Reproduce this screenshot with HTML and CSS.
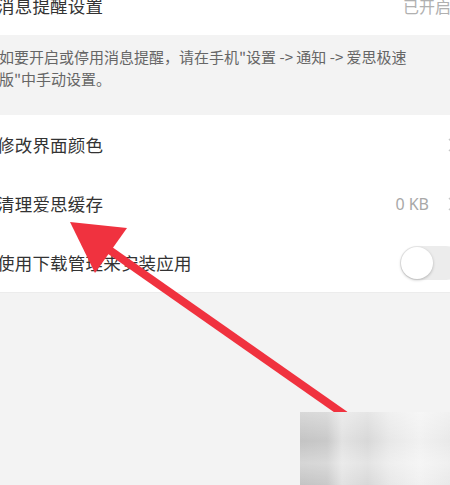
FILE: index.html
```html
<!DOCTYPE html>
<html>
<head>
  <meta name="viewport" content="width=device-width, initial-scale=1">
  <link rel="stylesheet" href="styles.css">
</head>
<body>
  <div class="page">
    <div class="row row-top">
      <span class="label">消息提醒设置</span>
      <span class="value value-on">已开启</span>
    </div>

    <div class="note">
      如要开启或停用消息提醒，请在手机"设置 -&gt; 通知 -&gt; 爱思极速<br>版"中手动设置。
    </div>

    <div class="group">
      <div class="row">
        <span class="label">修改界面颜色</span>
        <svg class="chevron" width="8" height="14" viewBox="0 0 8 14"><path d="M1 1l6 6-6 6" fill="none" stroke="#c8c8c8" stroke-width="1.5"/></svg>
      </div>
      <div class="row">
        <span class="label">清理爱思缓存</span>
        <span class="right">
          <span class="value">0 KB</span>
          <svg class="chevron" width="8" height="14" viewBox="0 0 8 14"><path d="M1 1l6 6-6 6" fill="none" stroke="#c8c8c8" stroke-width="1.5"/></svg>
        </span>
      </div>
      <div class="row">
        <span class="label">使用下载管理来安装应用</span>
        <span class="switch"><span class="knob"></span></span>
      </div>
    </div>
  </div>

  <!-- annotation arrow drawn over the screenshot -->
  <svg class="arrow" width="450" height="485" viewBox="0 0 450 485">
    <line x1="108" y1="249" x2="345" y2="415" stroke="#f0323f" stroke-width="8"/>
    <polygon points="70,222 127,228 95,273" fill="#f0323f"/>
  </svg>

  <div class="mark"></div>
</body>
</html>
```

FILE: styles.css
```css
html, body {
  margin: 0;
  height: 100%;
}
body {
  background: #f3f3f3;
  font-family: "Noto Sans CJK SC", "Noto Sans", sans-serif;
  color: #333;
  overflow: hidden;
  position: relative;
}
.page {
  width: 463px;
  margin-left: -3px;
}
.row {
  height: 59px;
  display: flex;
  align-items: center;
  justify-content: space-between;
  padding-right: 4px;
  background: #fff;
  font-size: 17.5px;
}
.row-top {
  margin-top: -24px;
  padding-right: 0;
}
.label {
  letter-spacing: 0.2px;
}
.value {
  color: #a8a8a8;
  font-size: 16px;
  font-family: "Noto Sans", "Noto Sans CJK SC", sans-serif;
}
.value-on {
  font-size: 16px;
  font-family: "Noto Sans CJK SC", sans-serif;
  color: #b0b0b0;
  margin-right: 9px;
}
.right {
  display: flex;
  align-items: center;
  gap: 19px;
}
.chevron {
  display: block;
}
.note {
  height: 80px;
  box-sizing: border-box;
  padding: 11px 0 0 2px;
  font-size: 15px;
  line-height: 22px;
  color: #666;
  white-space: nowrap;
}
.group {
  border-bottom: 1px solid #ececec;
}
.switch {
  width: 62px;
  height: 34px;
  border-radius: 17px;
  background: #ececec;
  display: flex;
  align-items: center;
  padding-left: 1px;
  margin-right: -7px;
}
.knob {
  width: 32px;
  height: 32px;
  border-radius: 50%;
  background: #fff;
  box-shadow: 0 1px 3px rgba(0, 0, 0, 0.25);
}
.arrow {
  position: absolute;
  left: 0;
  top: 0;
}
.mark {
  position: absolute;
  left: 300px;
  top: 412px;
  width: 150px;
  height: 73px;
  background:
    linear-gradient(180deg, rgba(255,255,255,0.35), rgba(255,255,255,0) 40%, rgba(255,255,255,0.3) 70%, rgba(255,255,255,0)),
    linear-gradient(90deg, #c4c4c4 0, #c9c9c9 18%, #e2e2e2 28%, #d8d8d8 45%, #e8e8e8 60%, #f1f1f1 80%, #e9e9e9 100%);
}
```
